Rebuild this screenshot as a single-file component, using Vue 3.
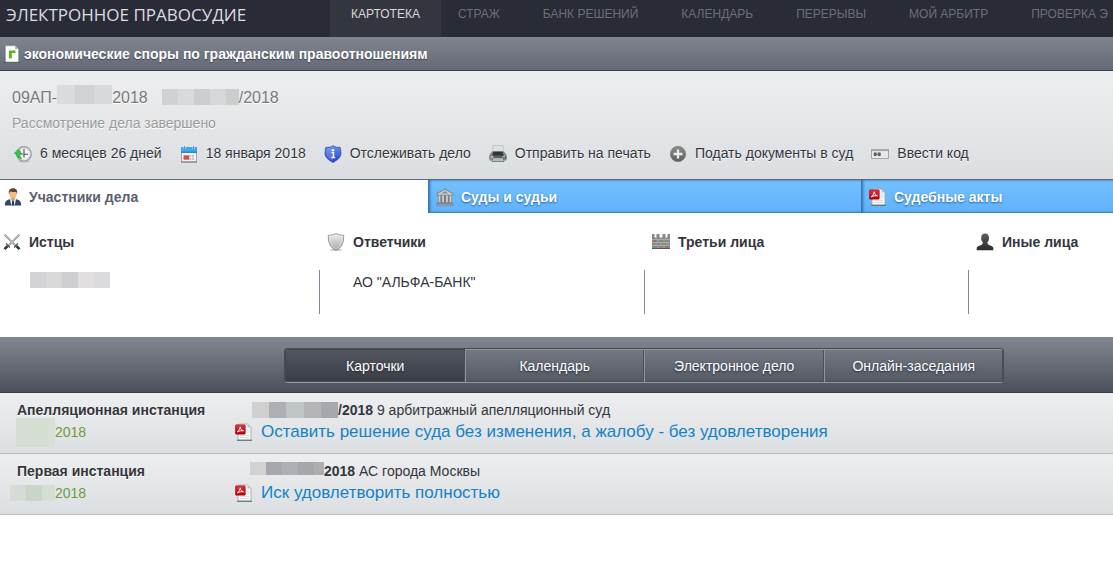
<script setup>
const navItems = ['СТРАЖ', 'БАНК РЕШЕНИЙ', 'КАЛЕНДАРЬ', 'ПЕРЕРЫВЫ', 'МОЙ АРБИТР', 'ПРОВЕРКА Э']

const actions = [
  { icon: 'clock', text: '6 месяцев 26 дней', tag: 'span' },
  { icon: 'calendar', text: '18 января 2018', tag: 'span' },
  { icon: 'track', text: 'Отслеживать дело', tag: 'button' },
  { icon: 'printer', text: 'Отправить на печать', tag: 'button' },
  { icon: 'plus', text: 'Подать документы в суд', tag: 'button' },
  { icon: 'code', text: 'Ввести код', tag: 'button' },
]

const tabs = [
  { icon: 'person', text: 'Участники дела' },
  { icon: 'court', text: 'Суды и судьи' },
  { icon: 'pdf', text: 'Судебные акты' },
]

const sides = [
  { icon: 'swords', title: 'Истцы', masked: ['#d3d3d6', '#d9d9da', '#cfcfd2', '#e1e0df', '#dadadf'] },
  { icon: 'shield', title: 'Ответчики', name: 'АО "АЛЬФА-БАНК"' },
  { icon: 'wall', title: 'Третьи лица' },
  { icon: 'other', title: 'Иные лица' },
]

const views = ['Карточки', 'Календарь', 'Электронное дело', 'Онлайн-заседания']

const numberMasks = [
  ['#d9dcdd', '#d0d2d4', '#d7dadd'],
  ['#cfd1d2', '#d8dadb', '#cbcdcf', '#d5d7d9', '#cbcdce'],
]

const instances = [
  {
    title: 'Апелляционная инстанция',
    dateMask: ['#d5ddd5', '#d3dfd0', '#d7e0d5'],
    tall: true,
    numberMask: ['#d0d0d1', '#afb0b5', '#c0c5c7', '#b5b5b7', '#a7a8ad'],
    number: '/2018',
    court: '9 арбитражный апелляционный суд',
    result: 'Оставить решение суда без изменения, а жалобу - без удовлетворения',
  },
  {
    title: 'Первая инстанция',
    dateMask: ['#d5dcd5', '#c9d6c7', '#d3dfd0'],
    numberMask: ['#d2d2d3', '#a7a8ad', '#afb0b5', '#a5a7ab', '#acadb1'],
    number: '2018',
    court: 'АС города Москвы',
    result: 'Иск удовлетворить полностью',
  },
]
</script>

<template>
  <svg class="sprite" aria-hidden="true">
    <defs>
      <linearGradient id="silver" x1="0" y1="0" x2="0" y2="1">
        <stop offset="0" stop-color="#f2f2f2" /><stop offset="1" stop-color="#a3a5a8" />
      </linearGradient>
      <linearGradient id="dark" x1="0" y1="0" x2="0" y2="1">
        <stop offset="0" stop-color="#5d5d5d" /><stop offset="1" stop-color="#2b2b2b" />
      </linearGradient>
      <linearGradient id="blue" x1="0" y1="0" x2="0" y2="1">
        <stop offset="0" stop-color="#6d92f0" /><stop offset="1" stop-color="#1d3ec0" />
      </linearGradient>
      <linearGradient id="red" x1="0" y1="0" x2="0" y2="1">
        <stop offset="0" stop-color="#e8303a" /><stop offset="1" stop-color="#b00008" />
      </linearGradient>
      <linearGradient id="grey" x1="0" y1="0" x2="0" y2="1">
        <stop offset="0" stop-color="#8b8b8b" /><stop offset="1" stop-color="#5f5f5f" />
      </linearGradient>
    </defs>

    <symbol id="i-doc" viewBox="0 0 18 18">
      <path d="M1 17.500h15.500" stroke="#3f5462" />
      <path d="M2.500.8h9.500l3.500 3.500V17h-13z" fill="#fff" stroke="#7f9f9a" stroke-width=".6" />
      <path d="M12 .8v3.500h3.500z" fill="#a9c4bc" />
      <path d="M6 13.500v-8h6.500v2.500H8.800v5.500z" fill="#57b81c" />
    </symbol>

    <symbol id="i-clock" viewBox="0 0 18 18">
      <ellipse cx="10" cy="16.500" rx="6" ry="1" fill="#bfc3c4" />
      <circle cx="10" cy="9" r="7.200" fill="#f2f4f2" stroke="#9a9f9f" stroke-width="1.400" />
      <circle cx="10" cy="9" r="5.600" fill="none" stroke="#d5d9d8" stroke-width=".8" />
      <path d="M10 4v8.500M10 9.200h4" stroke="#4b4f50" stroke-width="1.100" />
      <path d="M7 9h3" stroke="#777" stroke-width="1" />
      <path d="M0 8.500 4.500 4 8 9H6c0 2 .6 3.500 1.800 4.800C4.500 13.500 2.500 11.500 2.300 9z" fill="#2fc545" stroke="#1f9a34" stroke-width=".5" />
    </symbol>

    <symbol id="i-calendar" viewBox="0 0 18 18">
      <path d="M1.500 2.500h15v14.500h-15z" fill="#f0f1f1" stroke="#8f9599" stroke-width=".8" />
      <path d="M1 2h16v6H1z" fill="#3fa9e8" />
      <path d="M1 6.500h16V8H1z" fill="#2b87c5" />
      <path d="M4.500.5v3.500M13.500.5v3.500" stroke="#e5f2fa" stroke-width="1.800" />
      <path d="M4.500 1v3M13.500 1v3" stroke="#1c6fa8" stroke-width=".7" />
      <path d="M4 10h10v5H4z" fill="#c1c5c8" />
      <path d="M3.500 10.500h5.500v4H3.500z" fill="#e04a45" />
      <path d="M9 12.500h5M11.500 10v5" stroke="#f3f4f4" stroke-width=".7" />
      <path d="M1 17h16" stroke="#74797d" />
    </symbol>

    <symbol id="i-track" viewBox="0 0 18 18">
      <path d="M9 .7c2 1.500 4.500 2 7 1.600l.8 2c-.6 1 .2 2.200.2 3.700 0 4.500-3.500 7-8 9.400C4.500 15 1 12.500 1 8c0-1.500.8-2.700.2-3.700l.8-2C4.500 2.700 7 2.200 9 .7z" fill="url(#blue)" stroke="#2948b5" stroke-width=".8" />
      <path d="M9 1.800v14.400C5 14 2.200 11.800 2.200 8c0-1.500.6-2.700.2-3.500l.4-1C5 3.600 7 3.200 9 1.800z" fill="#8eaef6" opacity=".35" />
      <circle cx="9" cy="5.300" r="1.200" fill="#fff" />
      <path d="M7.600 7.600H9.500v4.500M7.400 12.500h3.800" stroke="#fff" stroke-width="1.400" fill="none" />
    </symbol>

    <symbol id="i-printer" viewBox="0 0 18 18">
      <path d="M4 .8h10v7H4z" fill="#f1f2f2" stroke="#a3a6a7" stroke-width=".7" />
      <path d="M5.500 3h7M5.500 5h7" stroke="#bfc2c3" stroke-width=".8" />
      <path d="M3 6.500h12l2.500 3.500v5.500H.5V10z" fill="#80868a" />
      <path d="M4.500 6.500h9l1.200 4.200H3.300z" fill="#303538" />
      <path d="M.5 11h17v2.500H.5z" fill="#5d6366" />
      <path d="M1.500 11h3v2.500h-3zM13.500 11H16v1.500h-2.500z" fill="#b4babc" />
      <path d="M4 13h10l1 3.500H3z" fill="#d7e1df" stroke="#545b5d" stroke-width=".7" />
      <path d="M4.500 15h9" stroke="#73a588" />
    </symbol>

    <symbol id="i-plus" viewBox="0 0 18 18">
      <circle cx="9" cy="9" r="7.700" fill="url(#grey)" stroke="#777" stroke-width=".6" />
      <path d="M9 4.500v9M4.500 9h9" stroke="#eceded" stroke-width="2.300" />
    </symbol>

    <symbol id="i-code" viewBox="0 0 18 18">
      <path d="M.5 5h17v8.500H.5z" fill="#e7e8e8" stroke="#a5a8a9" />
      <path d="M0 4.500h18v1.200H0z" fill="#8e9192" />
      <path d="M3 7.500h2.500v3.500H3zM7 7.500h2.500v3.500H7z" fill="#545657" />
      <path d="M2.500 9.200H10" stroke="#656768" stroke-width="1.200" />
    </symbol>

    <symbol id="i-person" viewBox="0 0 18 18">
      <path d="M.8 17.500c0-4 1.500-5.500 5.200-6.300h6c3.700.8 5.200 2.300 5.200 6.300z" fill="#334467" />
      <path d="M6 11h6l-1.200 6.500H7.200z" fill="#f0f2f5" />
      <path d="M8.300 12h1.400l.8 5.500h-3z" fill="#26406e" />
      <path d="M6.800 8h4.400v3.200L9 13l-2.200-1.800z" fill="#dca26c" />
      <ellipse cx="9" cy="6" rx="3.600" ry="4.300" fill="#efbd88" />
      <path d="M5 6.500C4.300 2.500 5.500.3 9 .3s4.700 2.200 4 6.200l-.8-2.500C10 4 7.500 4 6 3.500z" fill="#634229" />
    </symbol>

    <symbol id="i-court" viewBox="0 0 18 18">
      <path d="M9 1 17 5.500v1.800H1V5.500z" fill="#c7c8c9" stroke="#77797c" stroke-width=".9" />
      <path d="M9 3 12.500 5.500h-7z" fill="#8f9194" />
      <path d="M2 7.500h14V15H2z" fill="#7b7e81" />
      <path d="M3.500 7.500V15M7 7.500V15M11 7.500V15M14.500 7.500V15" stroke="#d0d1d2" stroke-width="1.700" />
      <path d="M1.500 14.500h15v1h-15zM.5 16h17v1.200H.5z" fill="#b5b7b9" stroke="#707276" stroke-width=".6" />
    </symbol>

    <symbol id="i-pdf" viewBox="0 0 18 18">
      <path d="M4 1h8.500L16 4.500V17H3V5z" fill="#f6f8f7" stroke="#94aaa6" stroke-width=".8" />
      <path d="M12.500 1v3.500H16z" fill="#b5c9c4" />
      <path d="M11.500 7h3M11.500 9h3M5 12.500h9M5 14.500h9" stroke="#d2dbd9" stroke-width=".9" />
      <path d="M2 17.300h15" stroke="#536f70" />
      <rect x=".3" y="1.800" width="10" height="9.400" rx="1" fill="url(#red)" stroke="#a5040b" stroke-width=".5" />
      <path d="M2.300 8.800C4 7.500 5.300 5 5.200 3.800c.2 2 1.500 3.700 3.300 4-2-.3-4 0-6.200 1z" fill="none" stroke="#fff" stroke-width="1" />
    </symbol>

    <symbol id="i-swords" viewBox="0 0 18 18">
      <path d="m1.500 1.500 12 12M16.500 1.500l-12 12" stroke="#8f9295" stroke-width="1.800" />
      <path d="m1.500 1.200 11 11M16.500 1.200l-11 11" stroke="#e4e5e6" stroke-width=".7" />
      <path d="m11 14.500 4-4M7 14.500l-4-4" stroke="#55595c" stroke-width="1.300" />
      <path d="m13.500 13.200 3 3M4.500 13.200l-3 3" stroke="#303336" stroke-width="2.600" />
    </symbol>

    <symbol id="i-shield" viewBox="0 0 18 18">
      <ellipse cx="9" cy="17" rx="6.500" ry=".9" fill="#c6c7c8" />
      <path d="M9 .6c2.400 1.200 5 1.700 7.700 1.700 0 7-1 12-7.700 14.900C2.300 14.300 1.300 9.300 1.300 2.300 4 2.300 6.600 1.800 9 .6z" fill="url(#silver)" stroke="#85878a" stroke-width=".8" />
      <path d="M9 2c2 .9 4.200 1.300 6.300 1.400C15 9 14.200 13.200 9 15.700 3.800 13.200 3 9 2.700 3.400 4.800 3.300 7 2.900 9 2z" fill="none" stroke="#e4e4e5" stroke-width=".7" />
    </symbol>

    <symbol id="i-wall" viewBox="0 0 18 18">
      <path d="M0 1h2.500v3.500h2V1h3v3.500h3V1h3v3.500h2V1H18v14.500H0z" fill="#858788" />
      <path d="M0 6.500h18M0 9.500h18M0 12.500h18M4 4.500v2M9 4.500v2M14 4.500v2M6 6.500v3M12 6.500v3M4 9.500v3M9 9.500v3M15 9.500v3M6 12.500v3M12 12.500v3" stroke="#b7b7b7" stroke-width=".7" />
      <path d="M1 10.200h2.500V12H1zM10 7.100h1.500v1.800H10zM10 10.200h4V12h-4z" fill="#6f9a67" />
      <path d="M1 7.100h3v1.800H1zM13 13.100h3v1.800h-3z" fill="#a46d60" />
      <path d="M0 15.500h18" stroke="#57595a" />
    </symbol>

    <symbol id="i-other" viewBox="0 0 18 18">
      <path d="M.7 17.300v-2.500c.6-2 3.300-2 5.300-3.300l1-2C5.500 8.500 5 6.500 5.200 4.300 5.500 1.700 6.800.5 9.200.5s3.600 1.300 3.800 3.800c.2 2.200-.3 4.200-1.800 5.200l1 2c2 1.300 4.500 1.300 5.100 3.300v2.500z" fill="url(#dark)" />
    </symbol>
  </svg>

  <div class="page">
    <header class="top">
      <a class="brand" href="#">ЭЛЕКТРОННОЕ ПРАВОСУДИЕ</a>
      <nav class="nav">
        <a class="nav-current" href="#">КАРТОТЕКА</a>
        <a v-for="item in navItems" :key="item" class="nav-link" href="#">{{ item }}</a>
      </nav>
    </header>

    <div class="category">
      <svg class="icon"><use href="#i-doc" /></svg>
      <h1>экономические споры по гражданским правоотношениям</h1>
    </div>

    <section class="case">
      <h2 class="numbers">
        <span class="number">09АП-<span class="mask mask-first"><i v-for="(c, n) in numberMasks[0]" :key="n" :style="{ background: c }"></i></span>2018</span>
        <span class="number"><span class="mask mask-second"><i v-for="(c, n) in numberMasks[1]" :key="n" :style="{ background: c }"></i></span>/2018</span>
      </h2>
      <p class="status">Рассмотрение дела завершено</p>
      <div class="actions">
        <component :is="a.tag" v-for="a in actions" :key="a.icon" class="action">
          <svg class="icon"><use :href="'#i-' + a.icon" /></svg>{{ a.text }}
        </component>
      </div>
    </section>

    <div class="tabs" role="tablist">
      <button v-for="(t, n) in tabs" :key="t.icon" class="tab" :class="{ active: n === 0 }" role="tab" :aria-selected="n === 0">
        <svg class="icon"><use :href="'#i-' + t.icon" /></svg>{{ t.text }}
      </button>
    </div>

    <section class="sides">
      <div v-for="s in sides" :key="s.icon" class="side">
        <h3><svg class="icon"><use :href="'#i-' + s.icon" /></svg>{{ s.title }}</h3>
        <div class="side-body">
          <span v-if="s.masked" class="mask"><i v-for="(c, n) in s.masked" :key="n" :style="{ background: c }"></i></span>
          <span v-if="s.name">{{ s.name }}</span>
        </div>
      </div>
    </section>

    <div class="switch-bar">
      <div class="switch">
        <button v-for="(v, n) in views" :key="v" class="view" :class="{ active: n === 0 }">{{ v }}</button>
      </div>
    </div>

    <section v-for="r in instances" :key="r.title" class="instance">
      <div>
        <h3>{{ r.title }}</h3>
        <div class="date">
          <span class="date-mask"><span class="mask" :class="r.tall ? 'mask-tall' : 'mask-wide'"><i v-for="(c, n) in r.dateMask" :key="n" :style="{ background: c }"></i></span></span>2018
        </div>
      </div>
      <div>
        <div class="court">
          <span class="mask" :class="r.tall ? 'mask-number' : 'mask-short'"><i v-for="(c, n) in r.numberMask" :key="n" :style="{ background: c }"></i></span><b>{{ r.number }}</b>&nbsp;{{ r.court }}
        </div>
        <a class="result" href="#"><svg class="icon"><use href="#i-pdf" /></svg>{{ r.result }}</a>
      </div>
    </section>
  </div>
</template>

<style>
body {
  margin: 0;
  background: #fff;
}
</style>

<style scoped>
.page {
  font: 14px/20px "Liberation Sans", Arial, sans-serif;
  color: #33353c;
  overflow: hidden;
}
.sprite {
  position: absolute;
  width: 0;
  height: 0;
}
.icon {
  flex: none;
  width: 18px;
  height: 18px;
}
h1, h2, h3, p {
  margin: 0;
  font-size: inherit;
}
a {
  color: inherit;
  text-decoration: none;
}
button {
  border: 0;
  padding: 0;
  background: none;
  font: inherit;
  color: inherit;
  cursor: pointer;
}

.top {
  display: flex;
  height: 37px;
  background: #292b36;
  white-space: nowrap;
}
.brand {
  flex: none;
  width: 324px;
  padding-left: 6px;
  font: 17px/30px "Open Sans", "Noto Sans", sans-serif;
  color: #dcdde0;
}
.nav {
  display: flex;
  font-size: 12px;
  line-height: 28px;
  color: #6c6f79;
}
.nav-current {
  padding: 0 21px;
  background: #34363f;
  color: #d7d8da;
}
.nav-link {
  padding: 0 26px 0 17px;
}

.category {
  display: flex;
  align-items: center;
  gap: 3px;
  height: 33px;
  padding-left: 3px;
  border-bottom: 1px solid #3b3e4c;
  background: linear-gradient(#80858f, #646976);
  color: #fff;
  text-shadow: 0 1px 1px #3d414c;
}

.case {
  padding: 17px 12px 15px;
  border-bottom: 1px solid #636979;
  background: linear-gradient(#edeeef, #dbdee1);
  text-shadow: 0 1px 0 #fff;
}
.numbers {
  display: flex;
  gap: 14px;
  font-size: 16px;
  font-weight: normal;
  line-height: 20px;
  color: #77797d;
}
.number {
  display: flex;
  align-items: center;
  height: 20px;
}
.status {
  padding: 5px 0 10px;
  color: #999b9e;
}
.actions {
  display: flex;
  gap: 18px;
  padding-left: 2px;
  line-height: 21px;
  white-space: nowrap;
}
.action {
  display: flex;
  align-items: center;
  gap: 8px;
  text-shadow: inherit;
}

.mask {
  display: inline-flex;
  flex: none;
  width: 80px;
  height: 16px;
  overflow: hidden;
}
.mask i {
  flex: 1 0 16px;
}
.mask-first {
  width: 55px;
  height: 19px;
  margin-bottom: 7px;
}
.mask-second {
  width: 77px;
  margin-bottom: 2px;
}
.mask-tall {
  width: 39px;
  height: 29px;
}
.mask-wide {
  width: 45px;
}
.mask-number {
  width: 86px;
}
.mask-short {
  width: 74px;
  height: 13px;
  margin: 0 0 5px -2px;
}

.tabs {
  display: grid;
  grid-template-columns: 428fr 433fr 252fr;
}
.tab {
  display: flex;
  align-items: center;
  gap: 7px;
  height: 33px;
  padding-left: 8px;
  background: linear-gradient(#74c0ff, #5fb2fd);
  box-shadow: inset 4px 0 3px -2px #2f6ea6, inset 0 -3px 2px -2px #347ab8, inset 0 3px 2px -2px #5299d5;
  color: #fff;
  font-weight: bold;
  text-shadow: 0 1px 2px #285e92;
}
.tab.active {
  padding-left: 4px;
  background: #fff;
  box-shadow: none;
  color: #5b6070;
  text-shadow: none;
}

.sides {
  display: grid;
  grid-template-columns: 319fr 325fr 324fr 145fr;
  padding: 18px 0 23px;
}
.side h3 {
  display: flex;
  align-items: center;
  gap: 8px;
  height: 22px;
  padding-left: 8px;
}
.side:first-child h3 {
  padding-left: 3px;
}
.side-body {
  height: 42px;
  margin-top: 17px;
  padding: 2px 0 0 33px;
  border-left: 1px solid #858897;
}
.side:first-child .side-body {
  border-color: transparent;
  padding-left: 29px;
}

.switch-bar {
  display: grid;
  grid-template-columns: 284fr 720fr 109fr;
  padding: 11px 0 9px;
  border-bottom: 1px solid #3b3e49;
  background: linear-gradient(#828792, #4c505b);
}
.switch {
  grid-column: 2;
  display: grid;
  grid-template-columns: repeat(4, 1fr);
  border: 1px solid #484c56;
  border-bottom-color: #9499a4;
  border-radius: 4px;
  overflow: hidden;
}
.view {
  height: 33px;
  border-left: 1px solid #8f949f;
  border-top: 1px solid #8f949f;
  background: linear-gradient(#737883, #555964);
  box-shadow: inset -1px -1px 0 #4a4e59;
  color: #fff;
  text-shadow: 0 1px 2px #252832;
}
.view.active {
  border-color: #41454e;
  background: linear-gradient(#52565e, #3a3d46);
}

.instance {
  display: grid;
  grid-template-columns: 235px 1fr;
  padding: 6px 0 10px;
  border-bottom: 1px solid #b9bcc1;
  background: linear-gradient(#edeeef, #dcdfe2);
  line-height: 22px;
}
.instance h3 {
  padding-left: 17px;
  line-height: 22px;
  text-shadow: 0 1px 0 #fff;
}
.date {
  display: flex;
  align-items: center;
  height: 22px;
  color: #6a9c3c;
}
.date-mask {
  display: flex;
  justify-content: flex-end;
  width: 55px;
}
.court {
  display: flex;
  align-items: center;
  height: 22px;
  padding-left: 17px;
}
.result {
  display: flex;
  align-items: center;
  gap: 8px;
  height: 22px;
  font-size: 17px;
  color: #1482c5;
}
</style>
